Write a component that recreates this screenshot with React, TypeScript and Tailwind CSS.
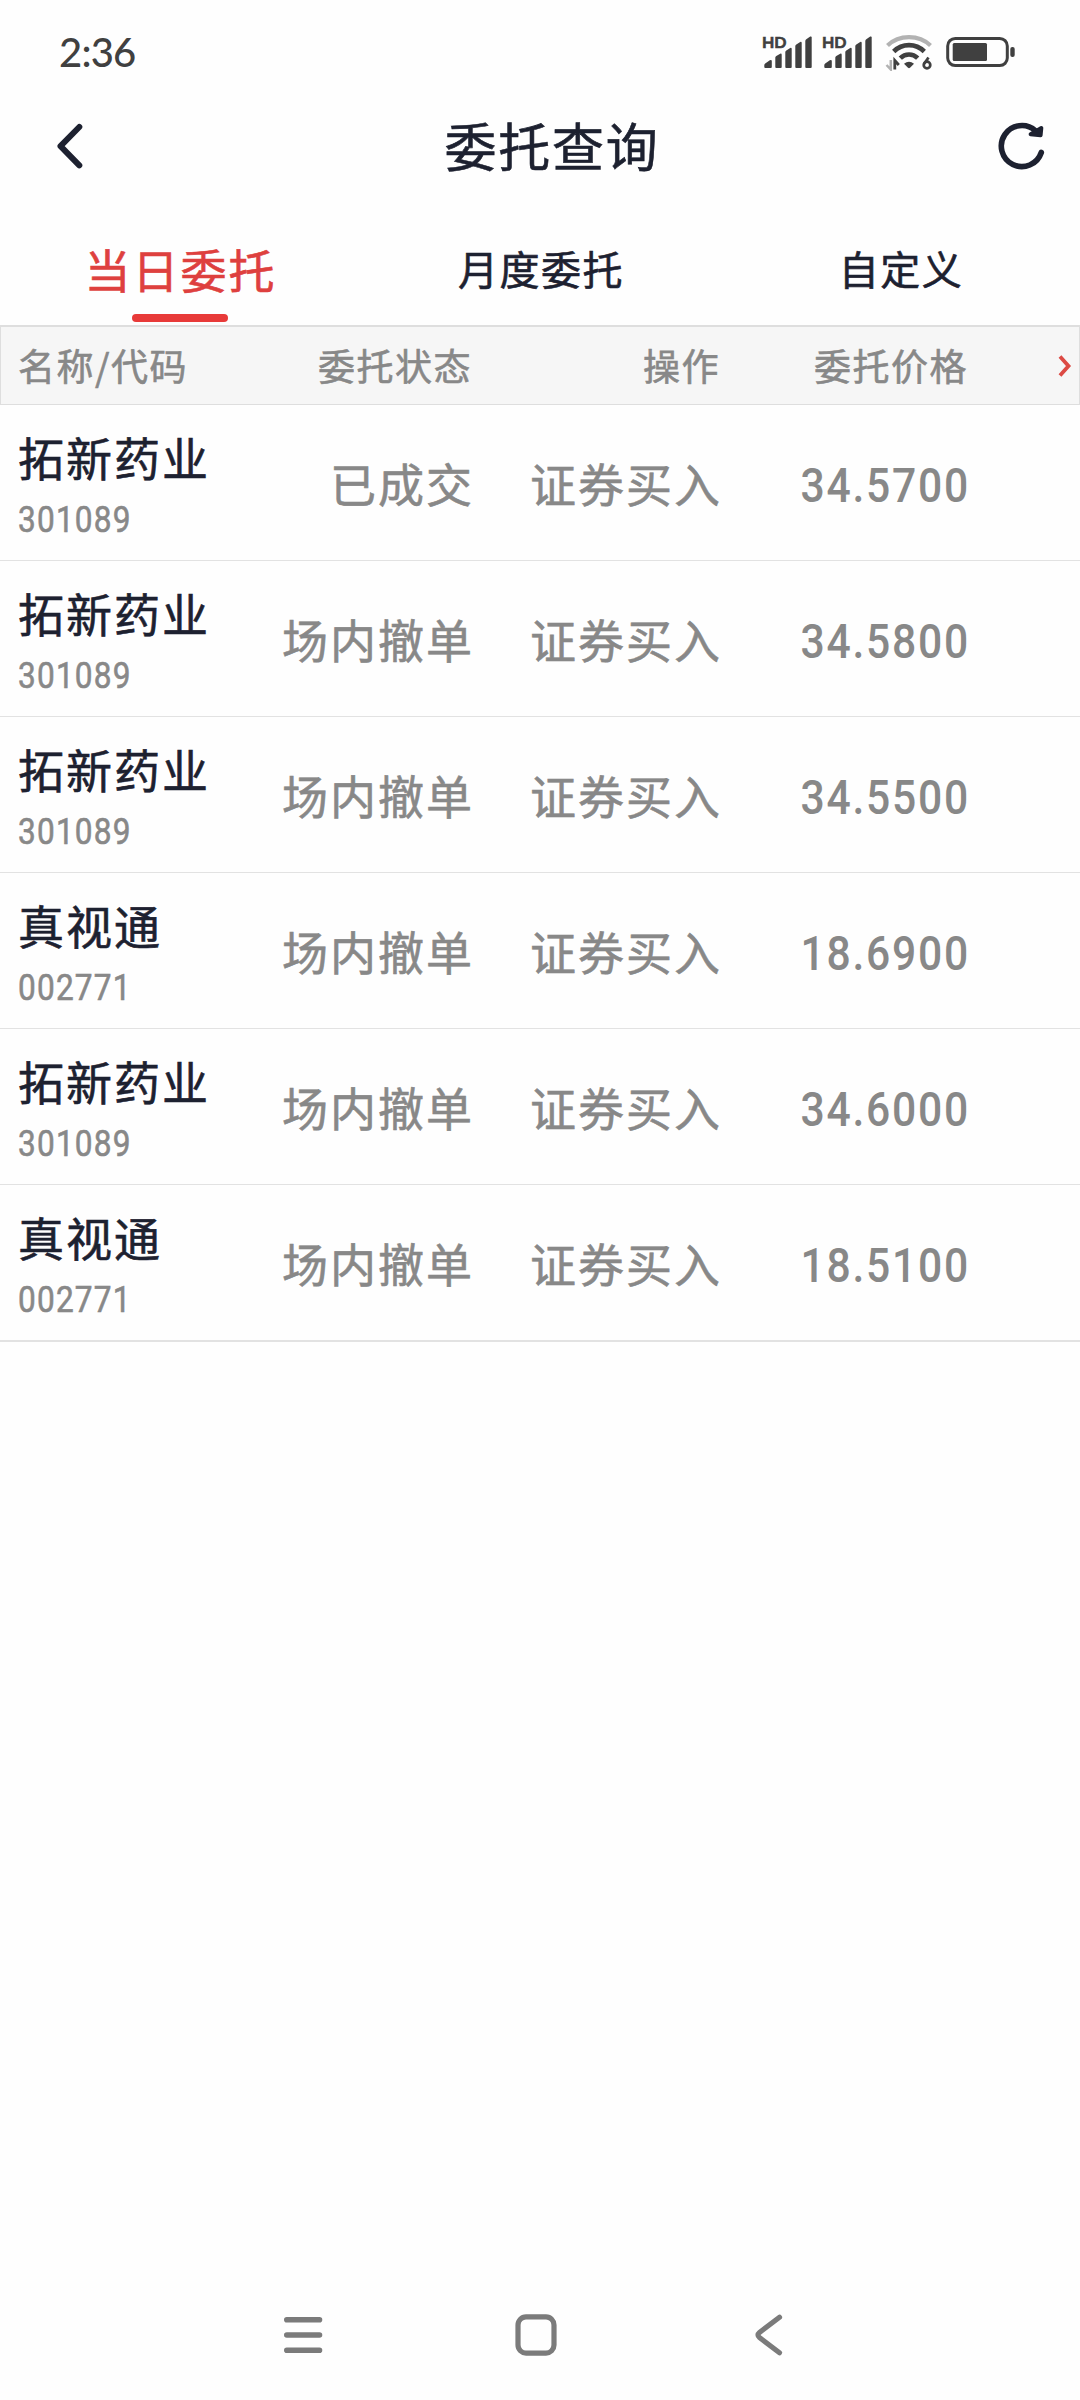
type Order = {
  name: string;
  code: string;
  status: string;
  action: string;
  price: string;
};

const tabs = ['当日委托', '月度委托', '自定义'];

const orders: Order[] = [
  { name: '拓新药业', code: '301089', status: '已成交', action: '证券买入', price: '34.5700' },
  { name: '拓新药业', code: '301089', status: '场内撤单', action: '证券买入', price: '34.5800' },
  { name: '拓新药业', code: '301089', status: '场内撤单', action: '证券买入', price: '34.5500' },
  { name: '真视通', code: '002771', status: '场内撤单', action: '证券买入', price: '18.6900' },
  { name: '拓新药业', code: '301089', status: '场内撤单', action: '证券买入', price: '34.6000' },
  { name: '真视通', code: '002771', status: '场内撤单', action: '证券买入', price: '18.5100' },
];

function SignalIcon() {
  return (
    <div className="relative h-[34px] w-[50px]">
      <span className="absolute -top-[2px] -left-px font-['Lato'] text-[16px] leading-[18px] font-bold text-[#404040]">HD</span>
      <svg width="50" height="34" viewBox="0 0 50 34" fill="#404040">
        <path d="M1.300 32v-2a2 2 0 0 1 .9-1.600l4.600-3.200q2-.9 2 1v5.800q0 1-1 1H2.300q-1 0-1-1Z" />
        <path d="M12.300 32V22.500q0-1 1-1.500l3.900-2.300q1.500-.5 1.500 1V32q0 1-1 1h-4.400q-1 0-1-1Z" />
        <path d="M22.300 32V17q0-1 1-1.600l3.900-2.500q1.500-.5 1.500 1V32q0 1-1 1h-4.400q-1 0-1-1Z" />
        <path d="M32.300 32V11q0-1 1-1.600l3.900-2.500q1.500-.5 1.500 1V32q0 1-1 1h-4.400q-1 0-1-1Z" />
        <path d="M42.300 32V6q0-1 1-1.700l3.900-2.700q1.500-.5 1.500 1V32q0 1-1 1h-4.400q-1 0-1-1Z" />
      </svg>
    </div>
  );
}

function WifiIcon() {
  return (
    <svg width="48" height="38" viewBox="0 0 48 38" fill="none">
      <path d="M2.500 12.500C14 1.300 34 1.300 45.500 12.500" stroke="#b2b2b2" strokeWidth="4.200" />
      <path d="M8.700 18.500c8.500-8.500 22.100-8.500 30.600 0" stroke="#404040" strokeWidth="4.600" />
      <path d="M15.300 25.200c4.900-4.900 12.500-4.900 17.400 0" stroke="#404040" strokeWidth="4.600" />
      <path d="M19 30.800q5-4 10 0l-4 4q-1 .8-2 0Z" fill="#404040" />
      <path d="M5.800 27v9.500L1.500 32" stroke="#b2b2b2" strokeWidth="2.500" />
      <path d="M9.800 36.500v-9l4 4.500" stroke="#404040" strokeWidth="2.800" />
      <circle cx="42" cy="32" r="3.300" stroke="#404040" strokeWidth="2.700" />
      <path d="M39.200 30.700 43.500 24.500" stroke="#404040" strokeWidth="2.700" />
    </svg>
  );
}

function BatteryIcon() {
  return (
    <svg width="70" height="32" viewBox="0 0 70 32" fill="none">
      <rect x="1.700" y="2.400" width="59.600" height="27.200" rx="7.500" stroke="#404040" strokeWidth="3" />
      <rect x="6.700" y="7" width="34.300" height="18" rx="1.500" fill="#404040" />
      <rect x="64.300" y="11" width="4.400" height="10" rx="2" fill="#404040" />
    </svg>
  );
}

function StatusBar() {
  return (
    <div className="flex h-[104px] items-center justify-between pr-[64px] pl-[59px]">
      <span className="font-['Lato'] text-[40px] leading-none font-medium tracking-[-0.8px] text-[#404040] [-webkit-text-stroke:0px]">
        2:36
      </span>
      <div className="flex items-center">
        <SignalIcon />
        <div className="ml-[10px]">
          <SignalIcon />
        </div>
        <div className="ml-[12px]">
          <WifiIcon />
        </div>
        <div className="ml-[13px]">
          <BatteryIcon />
        </div>
      </div>
    </div>
  );
}

function TitleBar() {
  return (
    <div className="flex h-[86px] items-center justify-between pt-px pr-[32px] pl-[54px]">
      <svg width="56" height="56" viewBox="0 0 56 56" fill="none" stroke="#1d2130" strokeWidth="6" strokeLinecap="round" strokeLinejoin="round">
        <path d="M25.300 7 6.500 26.200l18.800 19.200" />
      </svg>
      <h1 className="mr-[2px] mb-[5px] text-[52px] leading-none tracking-[1.800px]">委托查询</h1>
      <svg width="52" height="56" viewBox="0 0 52 56" fill="none" stroke="#1d2130" strokeWidth="5.600" strokeLinecap="round" strokeLinejoin="round">
        <path d="M45.300 32.500A20.500 20.500 0 1 1 39.500 10.800" />
        <path d="M45.300 8 44.600 15.300 34.600 14.300Z" fill="#1d2130" strokeWidth="4" />
      </svg>
    </div>
  );
}

function Tabs() {
  return (
    <div className="grid h-[135px] grid-cols-3">
      {tabs.map((tab, i) =>
        i === 0 ? (
          <div key={tab} className="flex flex-col items-center pt-[52px] text-[#de403e]">
            <span className="pl-px text-[46px] leading-[52px] tracking-[2px]">{tab}</span>
            <span className="mt-5 h-2 w-24 rounded-full bg-[#e83a39]" />
          </div>
        ) : (
          <div key={tab} className="flex flex-col items-center pt-[54px]">
            <span className="pl-[2px] text-[40px] leading-[48px] tracking-[1.500px]">{tab}</span>
          </div>
        ),
      )}
    </div>
  );
}

function TableHeader() {
  return (
    <div className="grid h-[80px] grid-cols-[222px_249px_248px_248px_1fr] items-center border border-t-2 border-[#dedede] bg-[#f6f6f6] text-[37px] leading-none tracking-[1.500px] text-[#888888]">
      <span className="pl-[17px] whitespace-nowrap">名称/代码</span>
      <span className="text-right">委托状态</span>
      <span className="text-right">操作</span>
      <span className="text-right">委托价格</span>
      <svg className="mr-[7px] justify-self-end" width="14" height="24" viewBox="0 0 14 24" fill="none" stroke="#dc4a44" strokeWidth="3.800">
        <path d="M2 2.500 10.500 12 2 21.500" />
      </svg>
    </div>
  );
}

function OrderRow({ order }: { order: Order }) {
  return (
    <div className="grid h-[156px] grid-cols-[225px_249px_248px_248px_1fr] items-center border-b border-[#e2e2e2] text-[46px] leading-none tracking-[2px] text-[#888888] last:h-[157px] last:border-b-2">
      <div className="flex flex-col items-start pl-[18px]">
        <span className="leading-[52px] whitespace-nowrap text-[#1d2130]">{order.name}</span>
        <span className="mt-[18px] mb-[-4px] origin-left scale-x-[.865] font-['Roboto'] text-[36.500px] leading-[40px] tracking-[1.400px] [-webkit-text-stroke:0.6px]">
          {order.code}
        </span>
      </div>
      <span className="mb-[2px] text-right">{order.status}</span>
      <span className="mb-[2px] text-right">{order.action}</span>
      <span className="mt-[6px] origin-right scale-x-[.87] text-right font-['Roboto'] text-[49px] font-medium tracking-[2px] [-webkit-text-stroke:0px]">
        {order.price}
      </span>
    </div>
  );
}

function NavBar() {
  return (
    <div className="flex h-[130px] items-center justify-between px-[280px]">
      <svg width="46" height="46" viewBox="0 0 46 46" fill="none" stroke="#7b7b7b" strokeWidth="5.600" strokeLinecap="round">
        <path d="M6.800 7.700h32.700M6.800 23h32.700M6.800 38.300h32.700" />
      </svg>
      <svg className="mr-2" width="46" height="46" viewBox="0 0 46 46" fill="none" stroke="#7b7b7b" strokeWidth="5.200">
        <rect x="5" y="4.900" width="36" height="36.200" rx="8" />
      </svg>
      <svg width="46" height="46" viewBox="0 0 46 46" fill="none" stroke="#7b7b7b" strokeWidth="5.200" strokeLinecap="round">
        <path d="M25.500 5.300 5.500 20.500q-3 2.500 0 5l20 15.200" />
      </svg>
    </div>
  );
}

export default function App() {
  return (
    <div className="flex h-[2400px] w-[1080px] flex-col overflow-hidden bg-[#fefefe] font-['Noto_Sans_CJK_SC',sans-serif] text-[#1d2130] [-webkit-text-stroke:0.6px]">
      <StatusBar />
      <TitleBar />
      <Tabs />
      <TableHeader />
      <div>
        {orders.map((order, i) => (
          <OrderRow key={i} order={order} />
        ))}
      </div>
      <div className="mt-auto">
        <NavBar />
      </div>
    </div>
  );
}
